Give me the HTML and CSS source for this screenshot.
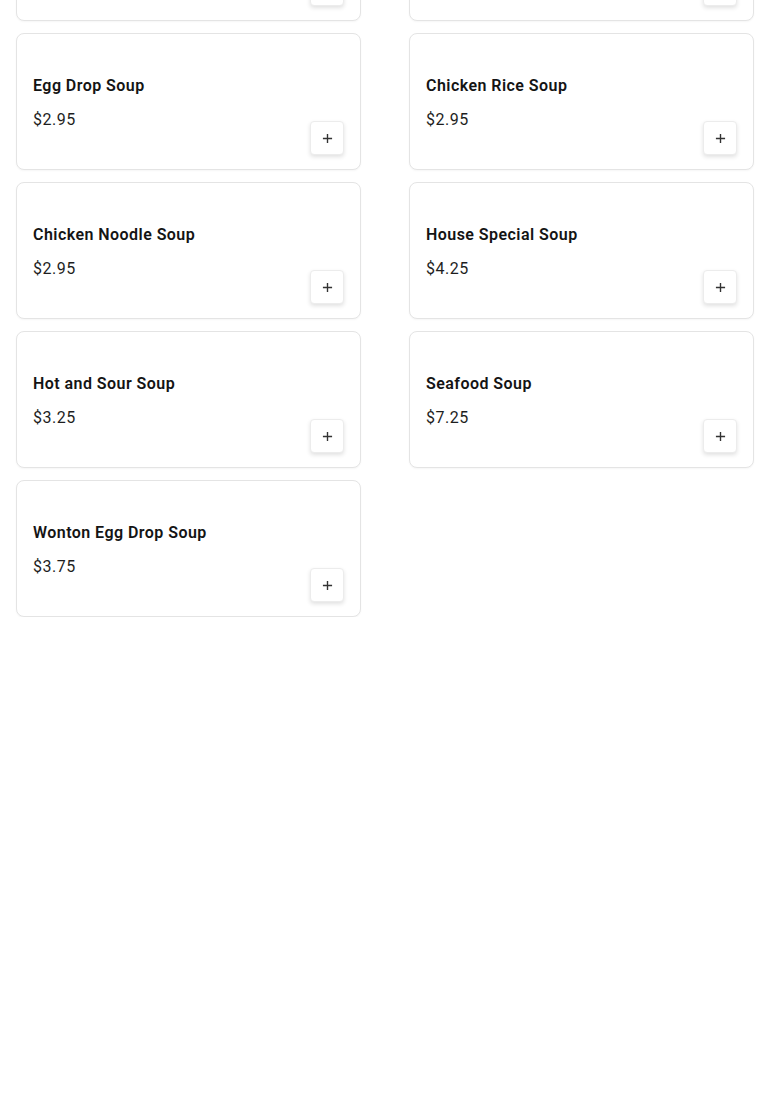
FILE: index.html
```html
<!DOCTYPE html>
<html lang="en">
<head>
  <meta charset="UTF-8">
  <title>Soups</title>
  <link rel="stylesheet" href="styles.css">
</head>
<body>
  <div class="menu">
    <div class="card">
      <div class="info">
        <h3 class="name">Wonton Soup</h3>
        <p class="price">$2.95</p>
      </div>
      <button class="add" type="button" aria-label="Add"><svg viewBox="0 0 12 12" width="12" height="12"><path d="M6 1v10M1 6h10" stroke="currentColor" stroke-width="1.5" fill="none"/></svg></button>
    </div>
    <div class="card">
      <div class="info">
        <h3 class="name">Vegetable Soup</h3>
        <p class="price">$2.95</p>
      </div>
      <button class="add" type="button" aria-label="Add"><svg viewBox="0 0 12 12" width="12" height="12"><path d="M6 1v10M1 6h10" stroke="currentColor" stroke-width="1.5" fill="none"/></svg></button>
    </div>
    <div class="card">
      <div class="info">
        <h3 class="name">Egg Drop Soup</h3>
        <p class="price">$2.95</p>
      </div>
      <button class="add" type="button" aria-label="Add"><svg viewBox="0 0 12 12" width="12" height="12"><path d="M6 1v10M1 6h10" stroke="currentColor" stroke-width="1.5" fill="none"/></svg></button>
    </div>
    <div class="card">
      <div class="info">
        <h3 class="name">Chicken Rice Soup</h3>
        <p class="price">$2.95</p>
      </div>
      <button class="add" type="button" aria-label="Add"><svg viewBox="0 0 12 12" width="12" height="12"><path d="M6 1v10M1 6h10" stroke="currentColor" stroke-width="1.5" fill="none"/></svg></button>
    </div>
    <div class="card">
      <div class="info">
        <h3 class="name">Chicken Noodle Soup</h3>
        <p class="price">$2.95</p>
      </div>
      <button class="add" type="button" aria-label="Add"><svg viewBox="0 0 12 12" width="12" height="12"><path d="M6 1v10M1 6h10" stroke="currentColor" stroke-width="1.5" fill="none"/></svg></button>
    </div>
    <div class="card">
      <div class="info">
        <h3 class="name">House Special Soup</h3>
        <p class="price">$4.25</p>
      </div>
      <button class="add" type="button" aria-label="Add"><svg viewBox="0 0 12 12" width="12" height="12"><path d="M6 1v10M1 6h10" stroke="currentColor" stroke-width="1.5" fill="none"/></svg></button>
    </div>
    <div class="card">
      <div class="info">
        <h3 class="name">Hot and Sour Soup</h3>
        <p class="price">$3.25</p>
      </div>
      <button class="add" type="button" aria-label="Add"><svg viewBox="0 0 12 12" width="12" height="12"><path d="M6 1v10M1 6h10" stroke="currentColor" stroke-width="1.5" fill="none"/></svg></button>
    </div>
    <div class="card">
      <div class="info">
        <h3 class="name">Seafood Soup</h3>
        <p class="price">$7.25</p>
      </div>
      <button class="add" type="button" aria-label="Add"><svg viewBox="0 0 12 12" width="12" height="12"><path d="M6 1v10M1 6h10" stroke="currentColor" stroke-width="1.5" fill="none"/></svg></button>
    </div>
    <div class="card">
      <div class="info">
        <h3 class="name">Wonton Egg Drop Soup</h3>
        <p class="price">$3.75</p>
      </div>
      <button class="add" type="button" aria-label="Add"><svg viewBox="0 0 12 12" width="12" height="12"><path d="M6 1v10M1 6h10" stroke="currentColor" stroke-width="1.5" fill="none"/></svg></button>
    </div>
  </div>
</body>
</html>
```

FILE: styles.css
```css
body {
  margin: 0;
  background-color: #ffffff;
  color: #1a1a1a;
  font-family: Roboto, "Liberation Sans", Arial, sans-serif;
}

/* list is scrolled: the first row sits above the viewport */
.menu {
  display: grid;
  grid-template-columns: 1fr 1fr;
  column-gap: 48px;
  row-gap: 12px;
  padding: 0 16px;
  margin-top: -116px;
}

.card {
  display: flex;
  justify-content: space-between;
  box-sizing: border-box;
  height: 137px;
  padding: 16px 16px 14px;
  background-color: #ffffff;
  border: 1px solid #e4e4e4;
  border-radius: 8px;
  box-shadow: 0 1px 2px rgba(0, 0, 0, 0.04);
}

.info {
  padding-top: 24px;
}

.name {
  margin: 0;
  font-size: 16px;
  line-height: 24px;
  font-weight: 600;
  letter-spacing: 0.45px;
  color: #141414;
}

.price {
  margin: 10px 0 0;
  font-size: 16px;
  line-height: 24px;
  letter-spacing: 0.5px;
  color: #1e1e1e;
}

.add {
  align-self: flex-end;
  display: flex;
  align-items: center;
  justify-content: center;
  width: 34px;
  height: 34px;
  padding: 0;
  background-color: #ffffff;
  color: #333333;
  border: 1px solid #ececec;
  border-radius: 4px;
  box-shadow: 0 2px 4px rgba(0, 0, 0, 0.12);
  cursor: pointer;
}

.add svg {
  width: 11px;
  height: 11px;
}
```
